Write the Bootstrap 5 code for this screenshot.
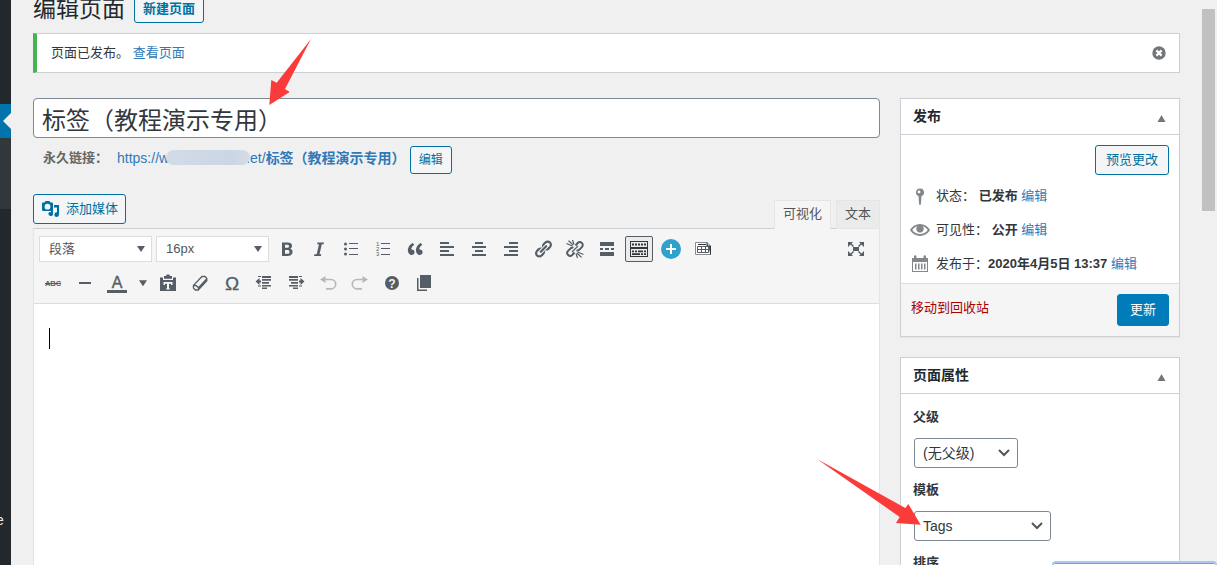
<!DOCTYPE html>
<html lang="zh-CN">
<head>
<meta charset="utf-8">
<meta name="viewport" content="width=device-width, initial-scale=1">
<title>编辑页面</title>
<link href="https://cdn.jsdelivr.net/npm/bootstrap@5.3.0/dist/css/bootstrap.min.css" rel="stylesheet">
<style>
  body { font: 13px/20px "Liberation Sans", "Noto Sans CJK SC", sans-serif; color: #32373c; background: #f0f0f0; height: 100vh; overflow: hidden; }
  a { color: #2f79b9; text-decoration: none; }
  .admin-menu { width: 11px; background: #23282d; overflow: hidden; color: #eee; padding-top: 104px; font-size: 14px; }
  .menu-current { height: 34px; background: #0073aa; position: relative; }
  .menu-current::after { content: ""; position: absolute; right: 0; top: 9px; border: 8px solid transparent; border-left: 0; border-right-color: #f0f0f0; }
  .menu-sub { height: 71px; background: #32373c; margin-bottom: 301px; }
  .menu-text { margin-left: -4px; }
  .wrap { padding: 0 22px; overflow: hidden; }
  .page-head { height: 23px; gap: 9px; }
  h1 { font-size: 23px; line-height: 27px; color: #23282d; }
  .btn { --bs-btn-font-size: 13px; --bs-btn-line-height: 20px; --bs-btn-padding-y: 4px; --bs-btn-padding-x: 10px; --bs-btn-border-radius: 3px; }
  .btn-wp { --bs-btn-color: #0071a1; --bs-btn-border-color: #0071a1; --bs-btn-bg: #f3f5f6; --bs-btn-hover-bg: #f1f1f1; --bs-btn-hover-color: #016087; --bs-btn-hover-border-color: #016087; }
  .btn-new { --bs-btn-padding-x: 8px; --bs-btn-padding-y: 3px; font-weight: 600; }
  .btn-slug { --bs-btn-font-size: 12px; --bs-btn-padding-x: 8px; --bs-btn-padding-y: 3px; }
  .btn-media { --bs-btn-padding-x: 7px; gap: 5px; }
  .btn-update { --bs-btn-bg: #007cba; --bs-btn-border-color: #007cba; --bs-btn-color: #fff; --bs-btn-hover-bg: #0071a1; --bs-btn-hover-color: #fff; --bs-btn-padding-x: 12px; --bs-btn-padding-y: 5px; }
  .notice { background: #fff; border: 1px solid #ccd0d4; border-left: 4px solid #46b450; height: 40px; margin: 10px 0 25px; padding: 0 13px 0 14px; }
  .dismiss { width: 14px; height: 14px; }
  .cols { gap: 20px; }
  .side { width: 280px; }
  .title-input { font-size: 24px; line-height: 32px; padding: 3px 8px; border-color: #7e8993; border-radius: 4px; color: #32373c; height: 40px; }
  .permalink { padding: 8px 10px 0; color: #666; height: 56px; }
  .permalink strong, .permalink a { line-height: 16px; }
  .permalink a { font-size: 14px; margin: 0 4px 0 9px; }
  .redacted { width: 84px; height: 15px; border-radius: 8px; margin: 0 -4px 0 -3px; background: linear-gradient(90deg, #d2dbe6, #cbd6e4 80%, #d6dde6); vertical-align: -2px; position: relative; }
  .ed-tabs { padding-top: 6px; gap: 5px; }
  .ed-tab { border: 1px solid #e5e5e5; background: #ebebeb; color: #555; padding: 0 8px 2px; line-height: 20px; height: 29px; }
  .ed-tab.current { background: #f5f5f5; border-bottom-color: #f5f5f5; height: 30px; margin-bottom: -1px; position: relative; z-index: 1; }
  .editor { border: 1px solid #e2e4e7; border-top-color: #ccd0d4; background: #fff; margin-top: -1px; }
  .ed-bar { background: #f5f5f5; border-bottom: 1px solid #ddd; padding: 7px 5px; }
  .ed-bar select { width: 113px; height: 26px; border: 1px solid #ddd; border-radius: 0; padding: 0 20px 0 9px; font-size: 13px; color: #50575e; background: #fff url("data:image/svg+xml,%3Csvg xmlns='http://www.w3.org/2000/svg' viewBox='0 0 8 6'%3E%3Cpath fill='%23555d66' d='M0 0h8L4 6z'/%3E%3C/svg%3E") no-repeat right 6px center/8px 6px; appearance: none; }
  .tool { width: 28px; height: 26px; border: 1px solid transparent; background: none; padding: 0; color: #555d66; border-radius: 2px; display: flex; align-items: center; justify-content: center; }
  .tool.on { border-color: #555d66; background: #ebebeb; color: #32373c; }
  .tool svg { fill: currentColor; width: 20px; height: 20px; flex: none; }
  .tool text { font-family: "Liberation Sans", sans-serif; }
  .ln { fill: none; stroke: currentColor; }
  .dim { color: #b4b9be; }
  .caret-tool { width: 15px; }
  .tool.caret-tool svg { width: 8px; height: 8px; }
  .canvas { min-height: 300px; padding: 24px 15px; }
  .cursor-bar { width: 1px; height: 21px; background: #000; }
  .wpbox { border: 1px solid #ccd0d4; background: #fff; margin-bottom: 20px; box-shadow: 0 1px 1px rgba(0,0,0,.04); }
  .wpbox h2 { font-size: 14px; line-height: 20px; font-weight: 700; color: #23282d; }
  .box-head { border-bottom: 1px solid #ccd0d4; height: 36px; padding: 0 13px 2px 12px; }
  .toggle { border: 0; background: none; padding: 6px 0 0; }
  .toggle svg { width: 9px; height: 7px; fill: #72777c; display: block; }
  .preview-row { padding: 10px 10px 4px; }
  .meta-row { height: 34px; padding-left: 9px; gap: 6px; }
  .meta-row svg { width: 20px; height: 20px; fill: #82878c; }
  .box-foot { border-top: 1px solid #ddd; background: #f5f5f5; padding: 10px; margin-top: 2px; }
  .trash { color: #a00; }
  .attrs { padding: 13px 13px 12px; }
  .attrs label { font-weight: 600; margin: 0 0 11px -1px; display: block; line-height: 20px; }
  .attrs select, .attrs input { height: 30px; border: 1px solid #7e8993; border-radius: 3px; padding: 0 24px 0 8px; font-size: 14px; line-height: 20px; color: #32373c; }
  .attrs select { background-image: url("data:image/svg+xml,%3Csvg xmlns='http://www.w3.org/2000/svg' viewBox='0 0 12 8'%3E%3Cpath fill='none' stroke='%23555' stroke-width='2' d='M1 1l5 5 5-5'/%3E%3C/svg%3E"); background-size: 12px 8px; background-position: right 7px center; }
  .attrs .field { margin-bottom: 12px; width: fit-content; }
  .sel-parent { width: 104px; }
  .sel-template { width: 137px; }
  .pointer { position: absolute; fill: #fb3a3a; pointer-events: none; z-index: 3; }
  .pointer-title { left: 236px; top: -59px; width: 42px; height: 66px; }
  .pointer-template { left: -97px; top: -52px; width: 104px; height: 66px; }
  .scroll-rail { width: 15px; padding-top: 9px; }
  .scroll-thumb { width: 13px; height: 202px; background: #c1c1c1; }
  .status-pop { position: absolute; right: 0; bottom: 0; width: 165px; height: 4px; border: 2px solid #a9caed; border-bottom: 0; border-radius: 4px 4px 0 0; background: linear-gradient(#6ea0d8 1px, #fff 1px); }
</style>
</head>
<body class="d-flex position-relative">
<nav class="admin-menu flex-shrink-0" aria-label="菜单">
  <div class="menu-current"></div>
  <div class="menu-sub"></div>
  <div class="menu-text">e</div>
</nav>

<main class="wrap flex-grow-1">
  <div class="page-head d-flex align-items-end">
    <h1 class="fw-normal m-0 text-nowrap">编辑页面</h1>
    <button type="button" class="btn btn-wp btn-new text-nowrap">新建页面</button>
  </div>

  <div class="notice d-flex align-items-center">
    <span>页面已发布。 <a href="#">查看页面</a></span>
    <button type="button" class="dismiss ms-auto border-0 bg-transparent p-0 d-flex" aria-label="忽略">
      <svg width="14" height="14" viewBox="0 0 14 14"><circle cx="7" cy="7" r="6.7" fill="#72777c"/><path d="M4.400 4.400l5.200 5.200M9.600 4.400L4.400 9.600" stroke="#fff" stroke-width="2.2"/></svg>
    </button>
  </div>

  <div class="cols d-flex align-items-start">
    <div class="flex-grow-1">
      <div class="position-relative">
        <input type="text" class="form-control title-input" aria-label="标题" value="标签（教程演示专用）">
        <svg class="pointer pointer-title" viewBox="0 0 42 66"><path d="M42 0L7.700 43.700 2.300 41 .3 66l20.400-13-4.700-3z"/></svg>
      </div>
      <div class="permalink d-flex align-items-start text-nowrap">
        <strong class="mt-1">永久链接：</strong>
        <a href="#" class="mt-1">https://w<span class="redacted d-inline-block"></span>.et/<strong>标签（教程演示专用）</strong></a>
        <button type="button" class="btn btn-wp btn-slug">编辑</button>
      </div>

      <div class="d-flex align-items-start">
        <button type="button" class="btn btn-wp btn-media d-flex align-items-center">
          <svg width="20" height="20" viewBox="0 0 20 20" fill="currentColor"><path fill-rule="evenodd" d="M2 3.500h1.500L4.500 2h4l1 1.500H11a1 1 0 0 1 1 1V11a1 1 0 0 1-1 1H2a1 1 0 0 1-1-1V4.500a1 1 0 0 1 1-1zM6.500 4.800a2.900 2.900 0 1 0 0 5.800 2.900 2.900 0 0 0 0-5.800z"/><path d="M13 6h5v9.500a2.300 2.300 0 1 1-2-2.200V8.500h-3zM8 13.300a2.300 2.300 0 0 1 2 0V10.500h2v5a2.300 2.300 0 1 1-4-2.200z"/></svg>
          添加媒体
        </button>
        <div class="ed-tabs d-flex align-items-start ms-auto">
          <button type="button" class="ed-tab current">可视化</button>
          <button type="button" class="ed-tab">文本</button>
        </div>
      </div>

      <div class="editor">
        <div class="ed-bar d-flex flex-column gap-2">
          <div class="d-flex gap-1">
            <select aria-label="段落格式"><option>段落</option></select>
            <select aria-label="字号"><option>16px</option></select>
            <button class="tool" aria-label="粗体"><svg viewBox="0 0 20 20"><path fill-rule="evenodd" d="M5 3.500h5.500c3 0 4.500 1.200 4.500 3.400 0 1.400-.8 2.400-2 2.800 1.700.4 2.600 1.500 2.600 3.100 0 2.700-1.900 4.200-5 4.200H5zm3 2.200v3.100h2c1.300 0 2-.5 2-1.600s-.7-1.500-2-1.500zm0 5.300v3.800h2.300c1.500 0 2.200-.6 2.200-1.900s-.8-1.900-2.300-1.900z"/></svg></button>
            <button class="tool" aria-label="斜体"><svg viewBox="0 0 20 20"><path d="M8.500 3.500H15l-.4 1.800h-1.800l-2.300 9.900h1.800l-.4 1.800H5l.4-1.800h2.300L10 5.300H8.100z"/></svg></button>
            <button class="tool" aria-label="项目符号列表"><svg viewBox="0 0 20 20"><circle cx="4.500" cy="5" r="1.500"/><circle cx="4.500" cy="10" r="1.500"/><circle cx="4.500" cy="15" r="1.500"/><path d="M8 4h9v1H8zM8 9h9v1H8zM8 15h9v1H8z"/></svg></button>
            <button class="tool" aria-label="编号列表"><svg viewBox="0 0 20 20"><text x="3" y="7" font-size="6">1</text><text x="3" y="12" font-size="6">2</text><text x="3" y="17" font-size="6">3</text><path d="M8 4h9v1H8zM8 9h9v1H8zM8 15h9v1H8z"/></svg></button>
            <button class="tool" aria-label="引用"><svg viewBox="0 0 20 20"><path d="M9.490 13.220c0-.74-.2-1.380-.61-1.900-.62-.78-1.830-.88-2.530-.72-.29-1.650 1.110-3.750 2.920-4.650L7.880 4c-2.730 1.300-5.420 4.280-4.960 8.050C3.210 14.430 4.590 16 6.540 16c.85 0 1.560-.25 2.120-.75s.83-1.180.83-2.030zm8.050 0c0-.74-.2-1.380-.61-1.900-.63-.78-1.830-.88-2.530-.72-.29-1.650 1.110-3.750 2.920-4.650L15.930 4c-2.730 1.300-5.410 4.280-4.950 8.050.29 2.380 1.660 3.950 3.610 3.950.85 0 1.560-.25 2.120-.75s.83-1.180.83-2.030z"/></svg></button>
            <button class="tool" aria-label="左对齐"><svg viewBox="0 0 20 20"><path d="M3 3h9v2H3zM3 7h14v2H3zM3 11h9v2H3zM3 15h14v2H3z"/></svg></button>
            <button class="tool" aria-label="居中对齐"><svg viewBox="0 0 20 20"><path d="M6 3h8v2H6zM3 7h14v2H3zM6 11h8v2H6zM3 15h14v2H3z"/></svg></button>
            <button class="tool" aria-label="右对齐"><svg viewBox="0 0 20 20"><path d="M8 3h9v2H8zM3 7h14v2H3zM8 11h9v2H8zM3 15h14v2H3z"/></svg></button>
            <button class="tool" aria-label="插入链接"><svg viewBox="0 0 20 20"><path d="M17.740 2.760c1.680 1.690 1.680 4.410 0 6.100l-1.530 1.520c-1.120 1.120-2.700 1.470-4.140 1.090l2.620-2.610.76-.77.76-.76c.84-.84.84-2.200 0-3.040-.84-.85-2.200-.85-3.040 0l-.77.76-3.380 3.380c-.37-1.440-.02-3.020 1.100-4.140l1.520-1.530c1.690-1.680 4.420-1.680 6.100 0zM8.590 13.430l5.340-5.340c.42-.42.42-1.100 0-1.520-.44-.43-1.130-.39-1.530 0l-5.330 5.340c-.42.42-.42 1.100 0 1.520.44.43 1.130.39 1.520 0zm-.76 2.290l4.140-4.150c.38 1.440.03 3.020-1.090 4.140l-1.520 1.530c-1.690 1.680-4.410 1.680-6.100 0-1.680-1.680-1.680-4.420 0-6.100l1.530-1.520c1.120-1.120 2.700-1.470 4.140-1.100l-4.140 4.150c-.85.84-.85 2.200 0 3.050.84.84 2.200.84 3.040 0z"/></svg></button>
            <button class="tool" aria-label="移除链接"><svg viewBox="0 0 20 20"><path class="ln" stroke-width="2" d="M10.500 6.500l2.200-2.500a2.900 2.900 0 0 1 4.200 4.100l-2.700 2.700a2.900 2.900 0 0 1-2.700.6M9.500 13.500L7.200 16a2.900 2.900 0 0 1-4.100-4.100l2.700-2.700a2.900 2.900 0 0 1 2.700-.6"/><path class="ln" stroke-width="1.200" d="M1.500 4.500l6 2.500M3.500 1.800l4.500 4M7.500 1l1.500 4.500M18.500 15.500l-6-2.500M16.500 18.200l-4.500-4M12.500 19L11 14.500M7 13l6-6"/></svg></button>
            <button class="tool" aria-label="插入 More 标签"><svg viewBox="0 0 20 20"><path d="M3 3h14v4H3zM3 9h3v2H3zM8 9h4v2H8zM14 9h3v2h-3zM3 13h14v4H3z"/></svg></button>
            <button class="tool on" aria-label="工具栏切换"><svg viewBox="0 0 20 20"><path fill-rule="evenodd" d="M1 2h18v7H1zm1 1v5h16V3zM1 9h18v9H1zm1 1v7h16v-7z"/><path d="M3 4.500h2v2H3zM6 4.500h2v2H6zM9 4.500h2v2H9zM12 4.500h2v2h-2zM15 4.500h2v2h-2zM3 11.500h2v1.700H3zM6 11.500h2v1.700H6zM9 11.500h5v1.700H9zM15 11.500h2v1.700h-2zM3 14.200h8V16H3zM12 14.200h2V16h-2zM15 14.200h2V16h-2z"/></svg></button>
            <button class="tool" aria-label="添加短代码"><svg viewBox="0 0 20 20"><circle cx="10" cy="10" r="10" fill="#2ea2cc"/><path fill="#fff" d="M9 5h2v4h4v2h-4v4H9v-4H5V9h4z"/></svg></button>
            <button class="tool" aria-label="插入表格"><svg viewBox="0 0 20 20"><path fill="#fff" stroke="#888" d="M2.500 3.500h11.500l3.500 3.500v8.500h-15z"/><path stroke="#333" d="M5 5.500h8M14 3.500V7h3.500v8.500"/><path class="ln" stroke="#999" d="M4.500 7.500h11v6h-11zM4.500 10.500h11M8.500 7.500v6M12.500 7.500v6"/></svg></button>
            <button class="tool ms-auto me-1" aria-label="全屏"><svg viewBox="0 0 20 20"><path d="M7 8h6v4H7zM2 3h5L5.500 4.500 8 7 7 8 4.500 5.500 2 8zM18 3v5l-2.500-2.500L13 8l-1-1 2.500-2.500L13 3zM2 17v-5l2.500 2.500L7 12l1 1-2.500 2.500L7 17zM18 17h-5l1.500-1.500L12 13l1-1 2.500 2.500L18 12z"/></svg></button>
          </div>
          <div class="d-flex gap-1">
            <button class="tool" aria-label="删除线"><svg viewBox="0 0 20 20"><text x="10" y="13" font-size="7.500" font-weight="700" text-anchor="middle">ABC</text><path d="M2 10h16v1H2z"/></svg></button>
            <button class="tool" aria-label="水平线"><svg viewBox="0 0 20 20"><path d="M4 9h12v2H4z"/></svg></button>
            <button class="tool" aria-label="文字颜色"><svg viewBox="0 0 20 20"><text x="10" y="15" font-size="16" text-anchor="middle" stroke="currentColor" stroke-width=".4">A</text><path d="M0 17h20v3H0z"/></svg></button>
            <button class="tool caret-tool ms-n1" aria-label="选择颜色"><svg viewBox="0 0 20 20"><path d="M0 3h20L10 18z"/></svg></button>
            <button class="tool" aria-label="粘贴为文本"><svg viewBox="0 0 20 20"><path fill-rule="evenodd" d="M2 4.500h3V7h10V4.500h3v13.500H2zM5.500 9v3h1.200l.5-1.300h1.800v4.600l-1 .4v.8h4v-.8l-1-.4v-4.600h1.800l.5 1.300h1.200V9z"/><path d="M6 3h2l.8-1.500h2.400L12 3h2v2.800H6z"/></svg></button>
            <button class="tool" aria-label="清除格式"><svg viewBox="0 0 20 20"><path class="ln" stroke-width="1.300" d="M12 3.500h3l1.800 1.800v2.500L8.200 17H5.400l-2-2v-2.600zM3.600 12.300L6 12.500l2.500 2.300-.3 2.200M8.500 14.800L16.600 6"/></svg></button>
            <button class="tool" aria-label="特殊字符"><svg viewBox="0 0 20 20"><text x="10" y="17" font-size="19" text-anchor="middle" stroke="currentColor" stroke-width=".3">Ω</text></svg></button>
            <button class="tool" aria-label="减少缩进"><svg viewBox="0 0 20 20"><path d="M8 3h9v2H8zM8 6h9v1.700H8zM8 9h7v1.700H8zM8 12h9v1.500H8zM8 14.500h5V16H8zM1.500 8.500l4-3.500v2.500H7v2H5.500V12zM4 3h3v1H4zM4 12.500h3v1H4z"/></svg></button>
            <button class="tool" aria-label="增加缩进"><svg viewBox="0 0 20 20"><path d="M3 3h9v2H3zM3 6h9v1.700H3zM5 9h7v1.700H5zM3 12h9v1.500H3zM7 14.500h5V16H7zM18.500 8.500l-4-3.500v2.500H13v2h1.500V12zM13 3h3v1h-3zM13 12.500h3v1h-3z"/></svg></button>
            <button class="tool dim" aria-label="撤销"><svg viewBox="0 0 20 20"><path d="M2 6.500L7.500 3v7z"/><path class="ln" stroke-width="1.700" d="M6 6.500h7a4.700 4.700 0 0 1 0 9.400H8"/></svg></button>
            <button class="tool dim" aria-label="重做"><svg viewBox="0 0 20 20"><path d="M18 6.500L12.500 3v7z"/><path class="ln" stroke-width="1.700" d="M14 6.500H7a4.700 4.700 0 0 0 0 9.400h5"/></svg></button>
            <button class="tool" aria-label="键盘快捷键"><svg viewBox="0 0 20 20"><circle cx="10" cy="10" r="7"/><text x="10" y="14.500" font-size="12" font-weight="700" text-anchor="middle" fill="#f5f5f5">?</text></svg></button>
            <button class="tool" aria-label="分页符"><svg viewBox="0 0 20 20"><path d="M6 2h11v13H6zM3 5h1.500v11.500H13V18H3z"/></svg></button>
          </div>
        </div>
        <div class="canvas" contenteditable="true" role="textbox" aria-label="正文"><div class="cursor-bar"></div></div>
      </div>
    </div>

    <aside class="side flex-shrink-0">
      <section class="wpbox">
        <div class="box-head d-flex align-items-center justify-content-between"><h2 class="m-0">发布</h2><button class="toggle" aria-label="切换面板：发布"><svg viewBox="0 0 8 7"><path d="M4 0l4 7H0z"/></svg></button></div>
        <div class="preview-row d-flex justify-content-end"><button type="button" class="btn btn-wp">预览更改</button></div>
        <div class="meta-row d-flex align-items-center"><svg viewBox="0 0 20 20"><path fill-rule="evenodd" d="M10 2.500a4 4 0 0 1 1.300 7.800L10.600 19H9.400l-.7-8.700A4 4 0 0 1 10 2.500zM9 4.500a1.400 1.400 0 1 0 0 2.800 1.400 1.400 0 0 0 0-2.800z"/><path d="M8.800 9h2.400v6l-.6 3H9.400l-.6-3z"/></svg><span>状态： <b>已发布</b> <a href="#">编辑</a></span></div>
        <div class="meta-row d-flex align-items-center"><svg viewBox="0 0 20 20"><path d="M19.700 9.400C17.700 6 14 3.900 10 3.900S2.300 6 .3 9.400L0 10l.3.6c2 3.400 5.700 5.500 9.700 5.500s7.700-2.100 9.700-5.500l.3-.6-.3-.6zM10 14.100c-3.100 0-6-1.600-7.700-4.100C3.600 8 5.700 6.600 8 6.100c-.9.6-1.500 1.700-1.500 2.900 0 1.900 1.600 3.500 3.500 3.500s3.500-1.600 3.500-3.500c0-1.200-.6-2.300-1.500-2.900 2.300.5 4.400 1.900 5.700 3.900-1.700 2.500-4.600 4.100-7.700 4.100z"/><circle cx="10" cy="8.800" r="3.500"/></svg><span>可见性： <b>公开</b> <a href="#">编辑</a></span></div>
        <div class="meta-row d-flex align-items-center"><svg viewBox="0 0 20 20"><path fill-rule="evenodd" d="M2 4h2V2.500a1 1 0 0 1 2.500 0V4h7V2.500a1 1 0 0 1 2.500 0V4h2v14H2zm1 4v9h14V8zM5 9.500h1.500v6H5zM8 9.500h1.500v6H8zM11 9.500h1.500v6H11zM14 9.500h1.500v6H14z"/></svg><span>发布于：<b>2020年4月5日 13:37</b> <a href="#">编辑</a></span></div>
        <div class="box-foot d-flex justify-content-between"><a href="#" class="trash mt-1">移动到回收站</a><button type="button" class="btn btn-update">更新</button></div>
      </section>

      <section class="wpbox">
        <div class="box-head d-flex align-items-center justify-content-between"><h2 class="m-0">页面属性</h2><button class="toggle" aria-label="切换面板：页面属性"><svg viewBox="0 0 8 7"><path d="M4 0l4 7H0z"/></svg></button></div>
        <div class="attrs">
          <label for="parent">父级</label>
          <div class="field"><select id="parent" class="form-select sel-parent"><option>(无父级)</option></select></div>
          <label for="template">模板</label>
          <div class="field position-relative"><select id="template" class="form-select sel-template"><option>Tags</option></select>
            <svg class="pointer pointer-template" viewBox="0 0 104 66"><path d="M0 0l88.300 49 3-4 12.400 20.700L79 64l3.700-6z"/></svg></div>
          <label for="order">排序</label>
          <input id="order" type="text" class="form-control" value="0">
        </div>
      </section>
    </aside>
  </div>
</main>

<div class="scroll-rail flex-shrink-0" aria-hidden="true"><div class="scroll-thumb"></div></div>
<div class="status-pop" aria-hidden="true"></div>
<script src="https://cdn.jsdelivr.net/npm/bootstrap@5.3.0/dist/js/bootstrap.bundle.min.js"></script>
</body>
</html>
